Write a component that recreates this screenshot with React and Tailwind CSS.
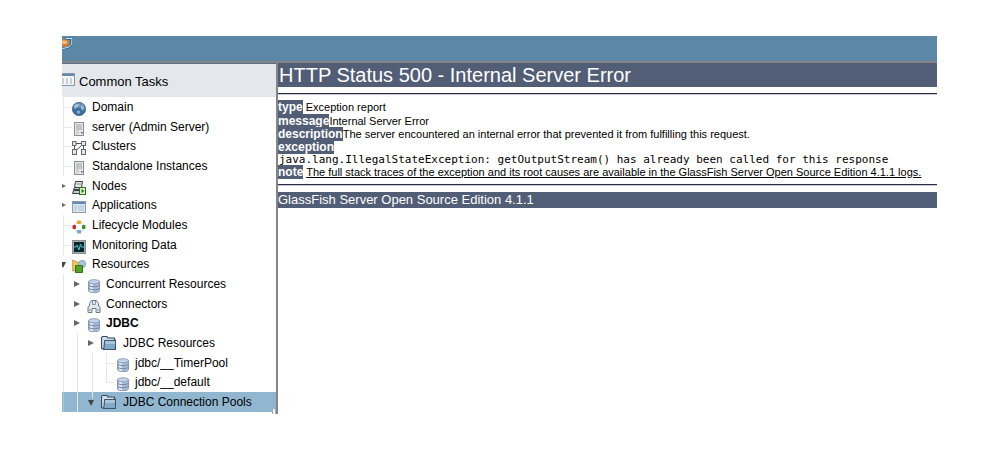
const treeItems = [
  { label: 'Domain', icon: 'globe', level: 0 },
  { label: 'server (Admin Server)', icon: 'server', level: 0 },
  { label: 'Clusters', icon: 'cluster', level: 0 },
  { label: 'Standalone Instances', icon: 'server', level: 0 },
  { label: 'Nodes', icon: 'nodes', level: 0, arrow: 'right' },
  { label: 'Applications', icon: 'window', level: 0, arrow: 'right' },
  { label: 'Lifecycle Modules', icon: 'lifecycle', level: 0 },
  { label: 'Monitoring Data', icon: 'monitor', level: 0 },
  { label: 'Resources', icon: 'resources', level: 0, arrow: 'down' },
  { label: 'Concurrent Resources', icon: 'database', level: 1, arrow: 'right' },
  { label: 'Connectors', icon: 'connector', level: 1, arrow: 'right' },
  { label: 'JDBC', icon: 'database', level: 1, arrow: 'right', bold: true },
  { label: 'JDBC Resources', icon: 'folder', level: 2, arrow: 'right' },
  { label: 'jdbc/__TimerPool', icon: 'database', level: 3 },
  { label: 'jdbc/__default', icon: 'database', level: 3, last: true },
  { label: 'JDBC Connection Pools', icon: 'folder', level: 2, arrow: 'down', selected: true },
];

const iconShapes = {
  globe: (
    <>
      <circle cx="7" cy="7" r="6.7" fill="#3f6f9e" stroke="#315779" strokeWidth=".6" />
      <path d="M2 4 5 2 7.5 2.5 6 4.5 4.5 5 4 7 2 6.5ZM9 4 12 4.5 12.5 7 10.5 8.5 9 7ZM5 9 7 8.5 8.5 10 7 12 5.5 11.5Z" fill="#8db4d3" />
      <ellipse cx="7" cy="3.5" rx="5" ry="2.5" fill="#fff" opacity=".25" />
    </>
  ),
  server: (
    <>
      <rect x="2.5" y=".5" width="9" height="13" fill="#e6e7e8" stroke="#8c8e91" />
      <path d="M4 3h6M4 5h6M4 7h6" stroke="#9aa0a7" />
      <path d="M4 9h3M4 11h3" stroke="#b9bcc0" />
      <path d="M9 10h1.5v1.5H9z" fill="#5a5d61" />
    </>
  ),
  cluster: (
    <>
      <path d="M4 2.5h6M2.5 4v5M10 4 4 9.5M11.5 4v5" stroke="#4c4f55" fill="none" />
      <g fill="#e3e8ee" stroke="#66696f">
        <rect x=".5" y=".5" width="3.5" height="4" />
        <rect x="9.5" y=".5" width="4" height="4" />
        <rect x=".5" y="8.5" width="4" height="5" />
        <rect x="9.5" y="8.5" width="4" height="5" />
      </g>
    </>
  ),
  nodes: (
    <>
      <path d="M3.5.5h7l-1 6h-7z" fill="#e4e6e8" stroke="#3c3e42" />
      <path d="M2.5 6.5h8v2h-9zM1.5 9.5h8v3h-9z" fill="#c9cccf" stroke="#3c3e42" />
      <path d="M4.5 3h5" stroke="#8a8d91" />
      <rect x="7.5" y="6.5" width="6" height="7" fill="#d8f4c8" stroke="#2d7020" />
      <path d="M9.5 8v4l3-2z" fill="#277a18" />
    </>
  ),
  window: (
    <>
      <rect x=".5" y="1.5" width="13" height="11" fill="#dce9f3" stroke="#8d9bab" />
      <path d="M1 2h12v2H1z" fill="#6589ae" />
      <path d="M2 6h3M2 8h3M2 10h3M6 6h6M6 8h6M6 10h6" stroke="#a9bfd3" />
    </>
  ),
  lifecycle: (
    <>
      <circle cx="7" cy="7" r="5" fill="none" stroke="#c3c8cd" />
      <rect x="5" y=".5" width="4" height="3.5" rx="1" fill="#e7a21a" />
      <rect x=".5" y="5" width="3.5" height="4" rx="1" fill="#c42828" />
      <rect x="10" y="5" width="3.5" height="4" rx="1" fill="#3d8c2d" />
      <rect x="5" y="10" width="4" height="3.5" rx="1" fill="#72a8d2" />
    </>
  ),
  monitor: (
    <>
      <rect x=".5" y=".5" width="13" height="13" fill="#a7abb0" stroke="#8b8f94" />
      <path d="M2 2h10v10H2z" fill="#06272e" />
      <path d="M2 7h2l1-2 2 5 1.5-6 1 3H12" fill="none" stroke="#4cc6cc" />
    </>
  ),
  resources: (
    <>
      <path d="M.7 1 7 4v7l-6.3 1z" fill="#f4c957" stroke="#b8862a" strokeWidth=".8" />
      <circle cx="10" cy="5" r="3.7" fill="#a9c5da" stroke="#7793a9" strokeWidth=".7" />
      <path d="M3.5 6.5h7v7h-7z" fill="#50a22d" stroke="#327519" />
    </>
  ),
  database: (
    <>
      <path d="M1.5 3v8.5c0 3 11 3 11 0V3z" fill="#a9bedb" stroke="#7b8ca3" strokeWidth=".8" />
      <path d="M3 4.5v8l3 .7V5z" fill="#dde8f4" />
      <path d="M1.5 6c1 2.3 10 2.3 11 0M1.5 9c1 2.3 10 2.3 11 0" fill="none" stroke="#71839d" />
      <ellipse cx="7" cy="2.8" rx="5.5" ry="2.1" fill="#c4d4e8" stroke="#8092aa" strokeWidth=".8" />
    </>
  ),
  connector: (
    <>
      <path d="M2.5 7V4.5l2-3h5l2 3V7l1.5 1v5.5H9V9.5H5v4H1V8z" fill="#dfe6ec" stroke="#717b85" />
      <path d="M5.5 2v3.5h3V2M1.5 11h3M9.5 11h3" fill="none" stroke="#8b99a6" />
    </>
  ),
  folder: (
    <>
      <path d="M.5 12.5V1.5l1-1h4l1 1.5h6v2h1v9H1.5z" fill="#cfdeea" stroke="#34495d" />
      <path d="M3.5 4.5h10v9h-11z" fill="#83a9c9" stroke="#3d566c" />
      <path d="M4 5h9v3H4z" fill="#a9c6dc" />
    </>
  ),
};

const rowPadding = ['pl-[10px]', 'pl-[25px]', 'pl-[39px]', 'pl-[54px]'];

function Icon({ name }) {
  return (
    <svg viewBox="0 0 14 14" className={`h-3.5 shrink-0 ${name === 'folder' ? 'w-[15px]' : 'mt-1 w-3.5'}`} preserveAspectRatio="none" aria-hidden="true">
      {iconShapes[name]}
    </svg>
  );
}

function Arrow({ direction }) {
  return (
    <svg viewBox="0 0 6 6" className="h-1.5 w-1.5" aria-hidden="true">
      <path d={direction === 'down' ? 'M0 0h6L3 6z' : 'M0 0v6l6-3z'} fill={direction === 'down' ? '#444' : '#666'} />
    </svg>
  );
}

// guide lines on the left of each row
function Guides({ item }) {
  const { level, arrow, last, selected } = item;
  return (
    <span className="pointer-events-none absolute inset-0" aria-hidden="true">
      {!(level === 0 && arrow) && <i className={`absolute inset-y-0 left-px w-px ${selected ? 'bg-[#a9c7da]' : 'bg-gray-200'}`} />}
      {level >= 2 && <i className="absolute inset-y-0 left-[15px] w-px bg-gray-200" />}
      {level === 3 && <i className="absolute inset-y-0 left-[30px] w-px bg-gray-200" />}
      {selected && <i className="absolute top-0 left-[30px] h-1.5 w-px bg-gray-200" />}
      {level === 3 && <i className={`absolute top-0 left-[44px] w-px bg-gray-200 ${last ? 'h-1/2' : 'h-full'}`} />}
      {level === 0 && !arrow && <i className="absolute top-1/2 left-px h-px w-2 bg-gray-200" />}
      {level === 3 && <i className="absolute top-1/2 left-[44px] h-px w-2 bg-gray-200" />}
    </span>
  );
}

function TreeRow({ item }) {
  const { label, icon, level, arrow, bold, selected } = item;
  return (
    <li className={`relative flex min-h-0 items-center ${rowPadding[level]} ${selected ? 'bg-[#91b7d0]' : ''}`}>
      <Guides item={item} />
      {arrow && (
        <span className="relative w-0">
          <span className={`absolute flex ${arrow === 'down' ? '-top-0.5' : '-top-[3px]'} ${level === 0 ? '-left-3' : '-left-[13px]'}`}>
            <Arrow direction={arrow} />
          </span>
        </span>
      )}
      <Icon name={icon} />
      <a href="#" className={`whitespace-nowrap text-black ${level === 2 ? 'ml-[7px]' : level === 0 ? 'ml-1.5' : 'ml-[5px]'} ${bold ? 'font-bold' : ''}`}>{label}</a>
    </li>
  );
}

function Sidebar() {
  return (
    <nav className="relative w-[216px] shrink-0 overflow-hidden border-r-2 border-[#858585] pb-0.5 text-[12px] leading-4">
      <h2 className="flex h-[34px] items-center border-t border-[#56718f] bg-[#e4e7ec] pt-0.5 text-[13px]">
        <svg viewBox="0 0 13 13" className="mr-1 mb-1 h-[13px] w-[13px]" aria-hidden="true">
          <path d="M0 .5h12.5v12H0" fill="#f3f5f7" stroke="#8496a8" />
          <path d="M0 1h12v2H0z" fill="#6789ab" />
          <path d="M0 6h3M4 6h3M8 6h3M0 8h3M4 8h3M8 8h3M0 10h3M4 10h3M8 10h3" stroke="#a1a8b0" strokeDasharray="2 1" />
        </svg>
        Common Tasks
      </h2>
      <ul className="grid h-[315px] auto-rows-fr">
        {treeItems.map((item) => <TreeRow key={item.label} item={item} />)}
      </ul>
      <span className="absolute right-0 bottom-0 h-[5px] w-1 border-x border-[#a5a5a5] bg-gray-100" aria-hidden="true" />
    </nav>
  );
}

function Label({ children }) {
  return <b className="bg-[#525d76] text-[12px] leading-3 text-white">{children}</b>;
}

function ErrorReport() {
  return (
    <main className="min-w-0 flex-1 overflow-hidden">
      <h1 className="h-6 bg-[#525d76] pl-px text-[20px] leading-6 whitespace-nowrap text-white">HTTP Status 500 - Internal Server Error</h1>
      <hr className="mt-1.5 h-0.5 border-t border-b border-t-[#292d43] border-b-[#c5c8d5]" />
      <div className="mt-1.5 text-[11px] leading-[13px] whitespace-nowrap">
        <p className="mb-px"><Label>type</Label> Exception report</p>
        <p><Label>message</Label>Internal Server Error</p>
        <p><Label>description</Label>The server encountered an internal error that prevented it from fulfilling this request.</p>
        <p><Label>exception</Label></p>
        <pre className="pl-px font-['DejaVu_Sans_Mono',monospace] text-[11px] leading-3">java.lang.IllegalStateException: getOutputStream() has already been called for this response</pre>
        <p><Label>note</Label> <u>The full stack traces of the exception and its root causes are available in the GlassFish Server Open Source Edition 4.1.1 logs.</u></p>
      </div>
      <hr className="mt-[5px] h-0.5 border-t border-b border-t-[#292d43] border-b-[#c5c8d5]" />
      <h3 className="mt-1.5 h-4 bg-[#525d76] text-[13px] leading-4 text-white">GlassFish Server Open Source Edition 4.1.1</h3>
    </main>
  );
}

export default function App() {
  return (
    <div className="min-h-screen bg-white pt-9 pr-[63px] pl-[62px] font-['Liberation_Sans',Arial,sans-serif] text-black">
      <header className="h-[27px] border-b-2 border-[#858585] bg-[#5c87a7]">
        <svg viewBox="0 0 12 14" className="h-3.5 w-3" aria-hidden="true">
          <path d="M3 2 11 1.5 10 9 7 12.5 0 13.5V12l5-1 3-4V4H3z" fill="#1c6ca3" />
          <path d="M4 2.5h6L9.5 8 7 11 0 12.8" fill="none" stroke="#c3e2f2" />
          <path d="M0 3.5 3 3l4.5 1.5V9L5 11H0z" fill="#c87f3b" />
          <path d="M0 4.5h3.5L6 6 4 8H0z" fill="#edb981" />
        </svg>
      </header>
      <div className="flex">
        <Sidebar />
        <ErrorReport />
      </div>
    </div>
  );
}
